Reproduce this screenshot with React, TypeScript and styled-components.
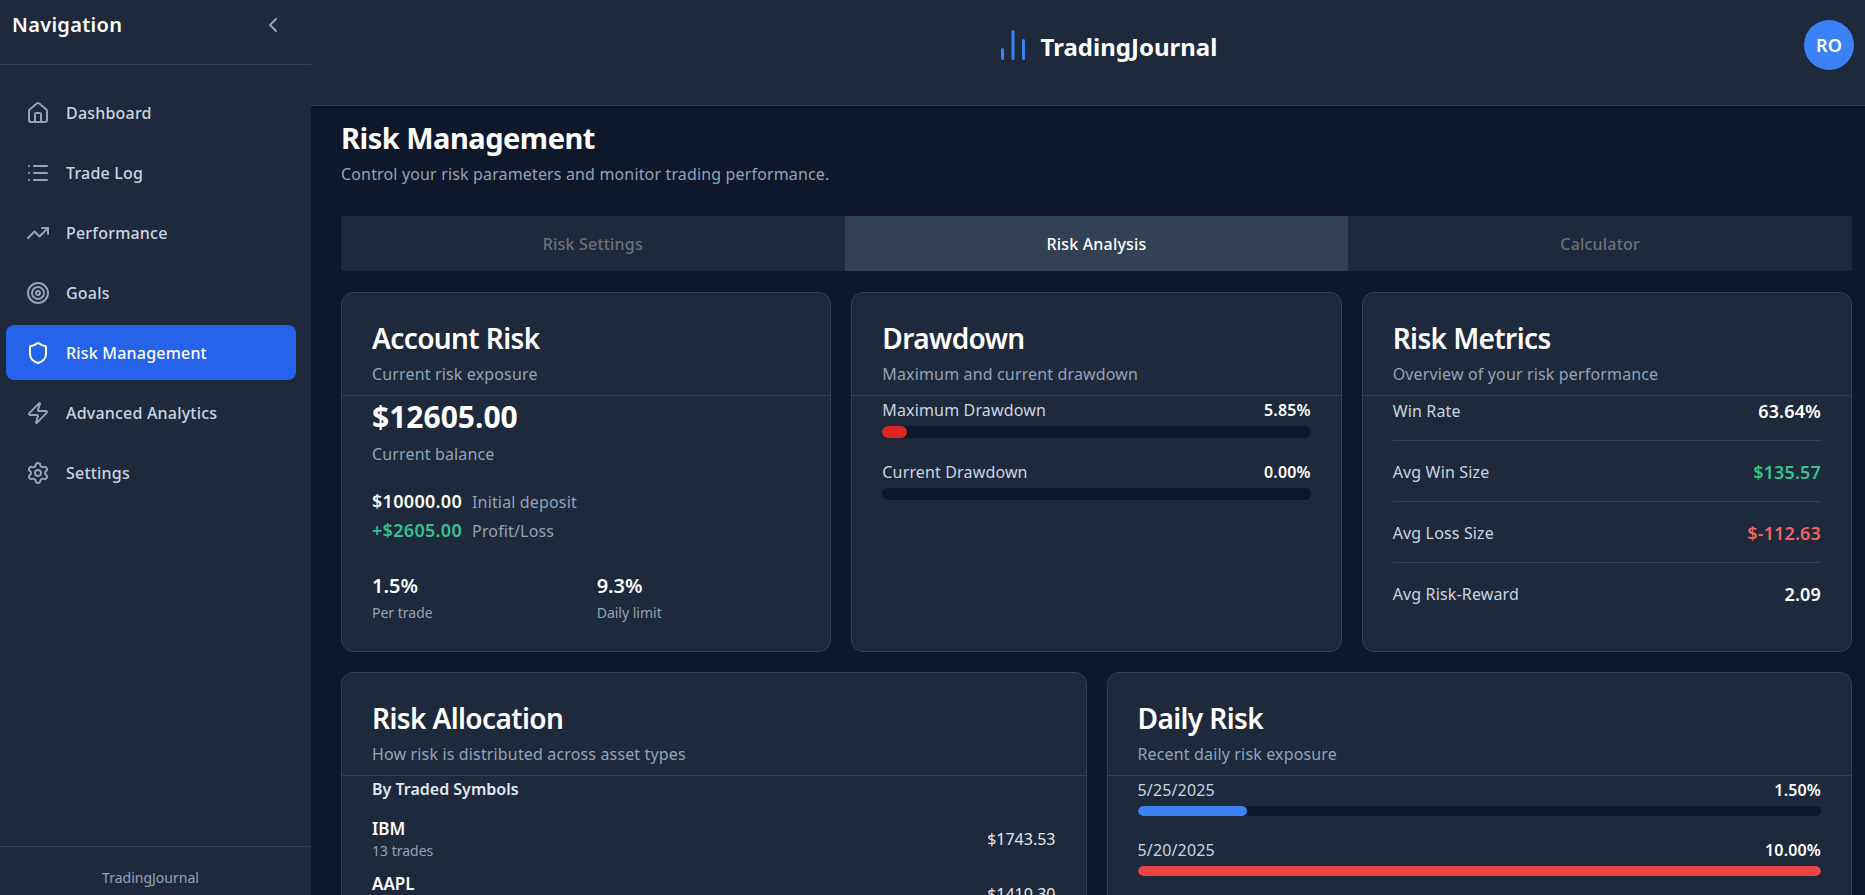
import { ReactNode } from "react";
import styled, { createGlobalStyle } from "styled-components";
import {
  ChartNoAxesColumn,
  ChevronLeft,
  House,
  List,
  Settings,
  Shield,
  Target,
  TrendingUp,
  Zap,
} from "lucide-react";

const GlobalStyle = createGlobalStyle`
  * {
    box-sizing: border-box;
  }
  html, body {
    margin: 0;
    height: 100%;
    overflow: hidden;
    background: #0f172a;
    font-family: "Noto Sans", "Open Sans", sans-serif;
    color: #ffffff;
  }
`;

const Layout = styled.div`
  display: flex;
  width: 100%;
  height: 895px;
  overflow: hidden;
`;

const Sidebar = styled.aside`
  width: 311px;
  flex-shrink: 0;
  display: flex;
  flex-direction: column;
  background: #1e293b;
`;

const SidebarHead = styled.div`
  height: 65px;
  flex-shrink: 0;
  padding: 10px 26px 0 12px;
  display: flex;
  justify-content: space-between;
  border-bottom: 1px solid #334155;
  color: #94a3b8;
`;

const SidebarTitle = styled.h2`
  margin: 0;
  font-size: 20px;
  line-height: 30px;
  font-weight: 600;
  letter-spacing: 0.3px;
  color: #ffffff;
`;

const Nav = styled.nav`
  flex: 1;
  padding: 20px 15px 0 6px;
  display: flex;
  flex-direction: column;
  gap: 5px;
`;

const NavItem = styled.a<{ $active?: boolean }>`
  height: 55px;
  padding: 0 20px;
  display: flex;
  align-items: center;
  gap: 16px;
  border-radius: 8px;
  font-size: 16px;
  font-weight: 500;
  letter-spacing: 0.2px;
  background: ${(p) => (p.$active ? "#2563eb" : "transparent")};
  color: ${(p) => (p.$active ? "#ffffff" : "#cbd5e1")};
  svg {
    color: ${(p) => (p.$active ? "#ffffff" : "#94a3b8")};
    flex-shrink: 0;
  }
`;

const SidebarFoot = styled.div`
  height: 49px;
  flex-shrink: 0;
  border-top: 1px solid #334155;
  padding: 21px 10px 0 0;
  text-align: center;
  font-size: 14px;
  line-height: 20px;
  color: #94a3b8;
`;

const Main = styled.main`
  flex: 1;
  min-width: 0;
  display: flex;
  flex-direction: column;
`;

const Header = styled.header`
  height: 106px;
  flex-shrink: 0;
  padding: 0 11px 16px 97px;
  display: flex;
  align-items: center;
  background: #1e293b;
  border-bottom: 1px solid #334155;
`;

const Logo = styled.div`
  margin: 0 auto;
  padding-top: 4px;
  display: flex;
  align-items: center;
  gap: 10px;
  font-size: 24px;
  font-weight: 700;
  svg {
    color: #3b82f6;
    margin-top: -3px;
  }
`;

const Avatar = styled.div`
  width: 50px;
  height: 50px;
  border-radius: 50%;
  display: flex;
  align-items: center;
  justify-content: center;
  background: #3b82f6;
  font-size: 18px;
  font-weight: 600;
`;

const Content = styled.div`
  flex: 1;
  min-height: 0;
  overflow: hidden;
  padding: 14px 13px 0 30px;
`;

const PageTitle = styled.h1`
  margin: 0;
  font-size: 29px;
  line-height: 35px;
  font-weight: 700;
  letter-spacing: -0.5px;
`;

const PageSub = styled.p`
  margin: 7px 0 30px;
  font-size: 16px;
  line-height: 24px;
  letter-spacing: 0.15px;
  color: #94a3b8;
`;

const Tabs = styled.div`
  display: grid;
  grid-template-columns: repeat(3, 1fr);
  height: 55px;
  margin-bottom: 21px;
  background: #1e293b;
`;

const Tab = styled.div<{ $active?: boolean }>`
  display: flex;
  align-items: center;
  justify-content: center;
  font-size: 16px;
  font-weight: 500;
  letter-spacing: 0.2px;
  background: ${(p) => (p.$active ? "#334155" : "transparent")};
  color: ${(p) => (p.$active ? "#ffffff" : "#6f7074")};
`;

const Grid = styled.div<{ $cols: number; $height?: number }>`
  display: grid;
  grid-template-columns: repeat(${(p) => p.$cols}, 1fr);
  gap: 20px;
  margin-bottom: 20px;
  ${(p) => (p.$height ? `height: ${p.$height}px;` : "")}
`;

const Card = styled.section`
  background: #1e293b;
  border: 1px solid #334155;
  border-radius: 12px;
`;

const CardHead = styled.div`
  padding: 29px 0 9px;
  border-bottom: 1px solid #334155;
`;

const CardTitle = styled.h3`
  margin: 0 30px 8px;
  font-size: 28px;
  line-height: 32px;
  font-weight: 600;
  letter-spacing: -0.6px;
`;

const CardSub = styled.p`
  margin: 0 30px;
  font-size: 16px;
  line-height: 24px;
  letter-spacing: 0.15px;
  color: #94a3b8;
`;

const CardBody = styled.div`
  padding: 0 30px;
`;

const Balance = styled.div`
  margin-top: 3px;
  font-size: 30px;
  line-height: 36px;
  font-weight: 700;
`;

const Caption = styled.div`
  margin-top: 7px;
  font-size: 16px;
  line-height: 24px;
  letter-spacing: 0.15px;
  color: #94a3b8;
`;

const AmountList = styled.div`
  margin-top: 21px;
  display: flex;
  flex-direction: column;
`;

const AmountRow = styled.div`
  display: flex;
  align-items: baseline;
  gap: 10px;
  line-height: 28px;
  font-size: 16px;
  letter-spacing: 0.15px;
  color: #94a3b8;
`;

const Amount = styled.span<{ $positive?: boolean }>`
  font-size: 18px;
  font-weight: 600;
  letter-spacing: 0.3px;
  color: ${(p) => (p.$positive ? "#34c48d" : "#ffffff")};
`;

const Limits = styled.div`
  margin-top: 27px;
  display: grid;
  grid-template-columns: repeat(2, 1fr);
  gap: 21px;
`;

const LimitValue = styled.div`
  font-size: 20px;
  line-height: 28px;
  font-weight: 600;
`;

const LimitLabel = styled.div`
  margin-top: 3px;
  font-size: 14px;
  line-height: 20px;
  color: #94a3b8;
`;

const MeterLabel = styled.div`
  display: flex;
  justify-content: space-between;
  align-items: center;
  height: 27px;
  margin-bottom: 3px;
  font-size: 16px;
  letter-spacing: 0.15px;
  color: #cbd5e1;
  strong {
    font-weight: 600;
    color: #ffffff;
  }
`;

const Meter = styled.div<{ $tall?: boolean }>`
  margin-bottom: 20px;
  overflow: hidden;
  height: ${(p) => (p.$tall ? 12 : 10)}px;
  border-radius: 6px;
  background: #0f172a;
`;

const MeterFill = styled.div<{ $color: string }>`
  height: 100%;
  border-radius: 6px;
  background: ${(p) => p.$color};
`;

const MetricRow = styled.div`
  display: flex;
  justify-content: space-between;
  align-items: center;
  padding: 17px 0 15px;
  line-height: 28px;
  font-size: 16px;
  letter-spacing: 0.15px;
  color: #cbd5e1;
  border-bottom: 1px solid #334155;
  &:first-child {
    padding-top: 1px;
  }
  &:last-child {
    border-bottom: none;
  }
`;

const MetricValue = styled.span<{ $color?: string }>`
  font-size: 18px;
  font-weight: 600;
  color: ${(p) => p.$color ?? "#ffffff"};
`;

const SectionLabel = styled.div`
  margin-bottom: 8px;
  font-size: 16px;
  line-height: 27px;
  font-weight: 600;
  color: #e2e8f0;
`;

const SymbolRow = styled.div`
  display: flex;
  justify-content: space-between;
  align-items: center;
  height: 55px;
`;

const SymbolName = styled.div`
  font-size: 17px;
  line-height: 24px;
  font-weight: 600;
`;

const SymbolTrades = styled.div`
  font-size: 14px;
  line-height: 20px;
  color: #94a3b8;
`;

const SymbolValue = styled.div`
  font-size: 16px;
  color: #e2e8f0;
`;

const navItems = [
  { label: "Dashboard", icon: House },
  { label: "Trade Log", icon: List },
  { label: "Performance", icon: TrendingUp },
  { label: "Goals", icon: Target },
  { label: "Risk Management", icon: Shield, active: true },
  { label: "Advanced Analytics", icon: Zap },
  { label: "Settings", icon: Settings },
];

const metrics = [
  { label: "Win Rate", value: "63.64%" },
  { label: "Avg Win Size", value: "$135.57", color: "#34c48d" },
  { label: "Avg Loss Size", value: "$-112.63", color: "#f06363" },
  { label: "Avg Risk-Reward", value: "2.09" },
];

const symbols = [
  { name: "IBM", trades: "13 trades", value: "$1743.53" },
  { name: "AAPL", trades: "9 trades", value: "$1410.30" },
];

const drawdowns = [
  { label: "Maximum Drawdown", value: 5.85 },
  { label: "Current Drawdown", value: 0 },
];

const dailyRisk = [
  { date: "5/25/2025", value: 1.5, width: 16, color: "#3b82f6" },
  { date: "5/20/2025", value: 10, width: 100, color: "#ef4444" },
];

function RiskCard(props: { title: string; sub: string; children: ReactNode }) {
  return (
    <Card>
      <CardHead>
        <CardTitle>{props.title}</CardTitle>
        <CardSub>{props.sub}</CardSub>
      </CardHead>
      <CardBody>{props.children}</CardBody>
    </Card>
  );
}

export default function App() {
  return (
    <Layout>
      <GlobalStyle />
      <Sidebar>
        <SidebarHead>
          <SidebarTitle>Navigation</SidebarTitle>
          <ChevronLeft size={24} style={{ marginTop: 3 }} />
        </SidebarHead>
        <Nav>
          {navItems.map((item) => (
            <NavItem key={item.label} $active={item.active}>
              <item.icon size={24} strokeWidth={2} />
              {item.label}
            </NavItem>
          ))}
        </Nav>
        <SidebarFoot>TradingJournal</SidebarFoot>
      </Sidebar>
      <Main>
        <Header>
          <Logo>
            <ChartNoAxesColumn size={36} strokeWidth={2} />
            TradingJournal
          </Logo>
          <Avatar>RO</Avatar>
        </Header>
        <Content>
          <PageTitle>Risk Management</PageTitle>
          <PageSub>Control your risk parameters and monitor trading performance.</PageSub>
          <Tabs>
            <Tab>Risk Settings</Tab>
            <Tab $active>Risk Analysis</Tab>
            <Tab>Calculator</Tab>
          </Tabs>
          <Grid $cols={3} $height={360}>
            <RiskCard title="Account Risk" sub="Current risk exposure">
              <Balance>$12605.00</Balance>
              <Caption>Current balance</Caption>
              <AmountList>
                <AmountRow>
                  <Amount>$10000.00</Amount> Initial deposit
                </AmountRow>
                <AmountRow>
                  <Amount $positive>+$2605.00</Amount> Profit/Loss
                </AmountRow>
              </AmountList>
              <Limits>
                <div>
                  <LimitValue>1.5%</LimitValue>
                  <LimitLabel>Per trade</LimitLabel>
                </div>
                <div>
                  <LimitValue>9.3%</LimitValue>
                  <LimitLabel>Daily limit</LimitLabel>
                </div>
              </Limits>
            </RiskCard>
            <RiskCard title="Drawdown" sub="Maximum and current drawdown">
              {drawdowns.map((d) => (
                <div key={d.label}>
                  <MeterLabel>
                    {d.label}
                    <strong>{d.value.toFixed(2)}%</strong>
                  </MeterLabel>
                  <Meter $tall>
                    <MeterFill $color="#dc2626" style={{ width: `${d.value}%` }} />
                  </Meter>
                </div>
              ))}
            </RiskCard>
            <RiskCard title="Risk Metrics" sub="Overview of your risk performance">
              {metrics.map((m) => (
                <MetricRow key={m.label}>
                  {m.label}
                  <MetricValue $color={m.color}>{m.value}</MetricValue>
                </MetricRow>
              ))}
            </RiskCard>
          </Grid>
          <Grid $cols={2}>
            <RiskCard title="Risk Allocation" sub="How risk is distributed across asset types">
              <SectionLabel>By Traded Symbols</SectionLabel>
              {symbols.map((s) => (
                <SymbolRow key={s.name}>
                  <div>
                    <SymbolName>{s.name}</SymbolName>
                    <SymbolTrades>{s.trades}</SymbolTrades>
                  </div>
                  <SymbolValue>{s.value}</SymbolValue>
                </SymbolRow>
              ))}
            </RiskCard>
            <RiskCard title="Daily Risk" sub="Recent daily risk exposure">
              {dailyRisk.map((d) => (
                <div key={d.date}>
                  <MeterLabel>
                    {d.date}
                    <strong>{d.value.toFixed(2)}%</strong>
                  </MeterLabel>
                  <Meter>
                    <MeterFill $color={d.color} style={{ width: `${d.width}%` }} />
                  </Meter>
                </div>
              ))}
            </RiskCard>
          </Grid>
        </Content>
      </Main>
    </Layout>
  );
}
